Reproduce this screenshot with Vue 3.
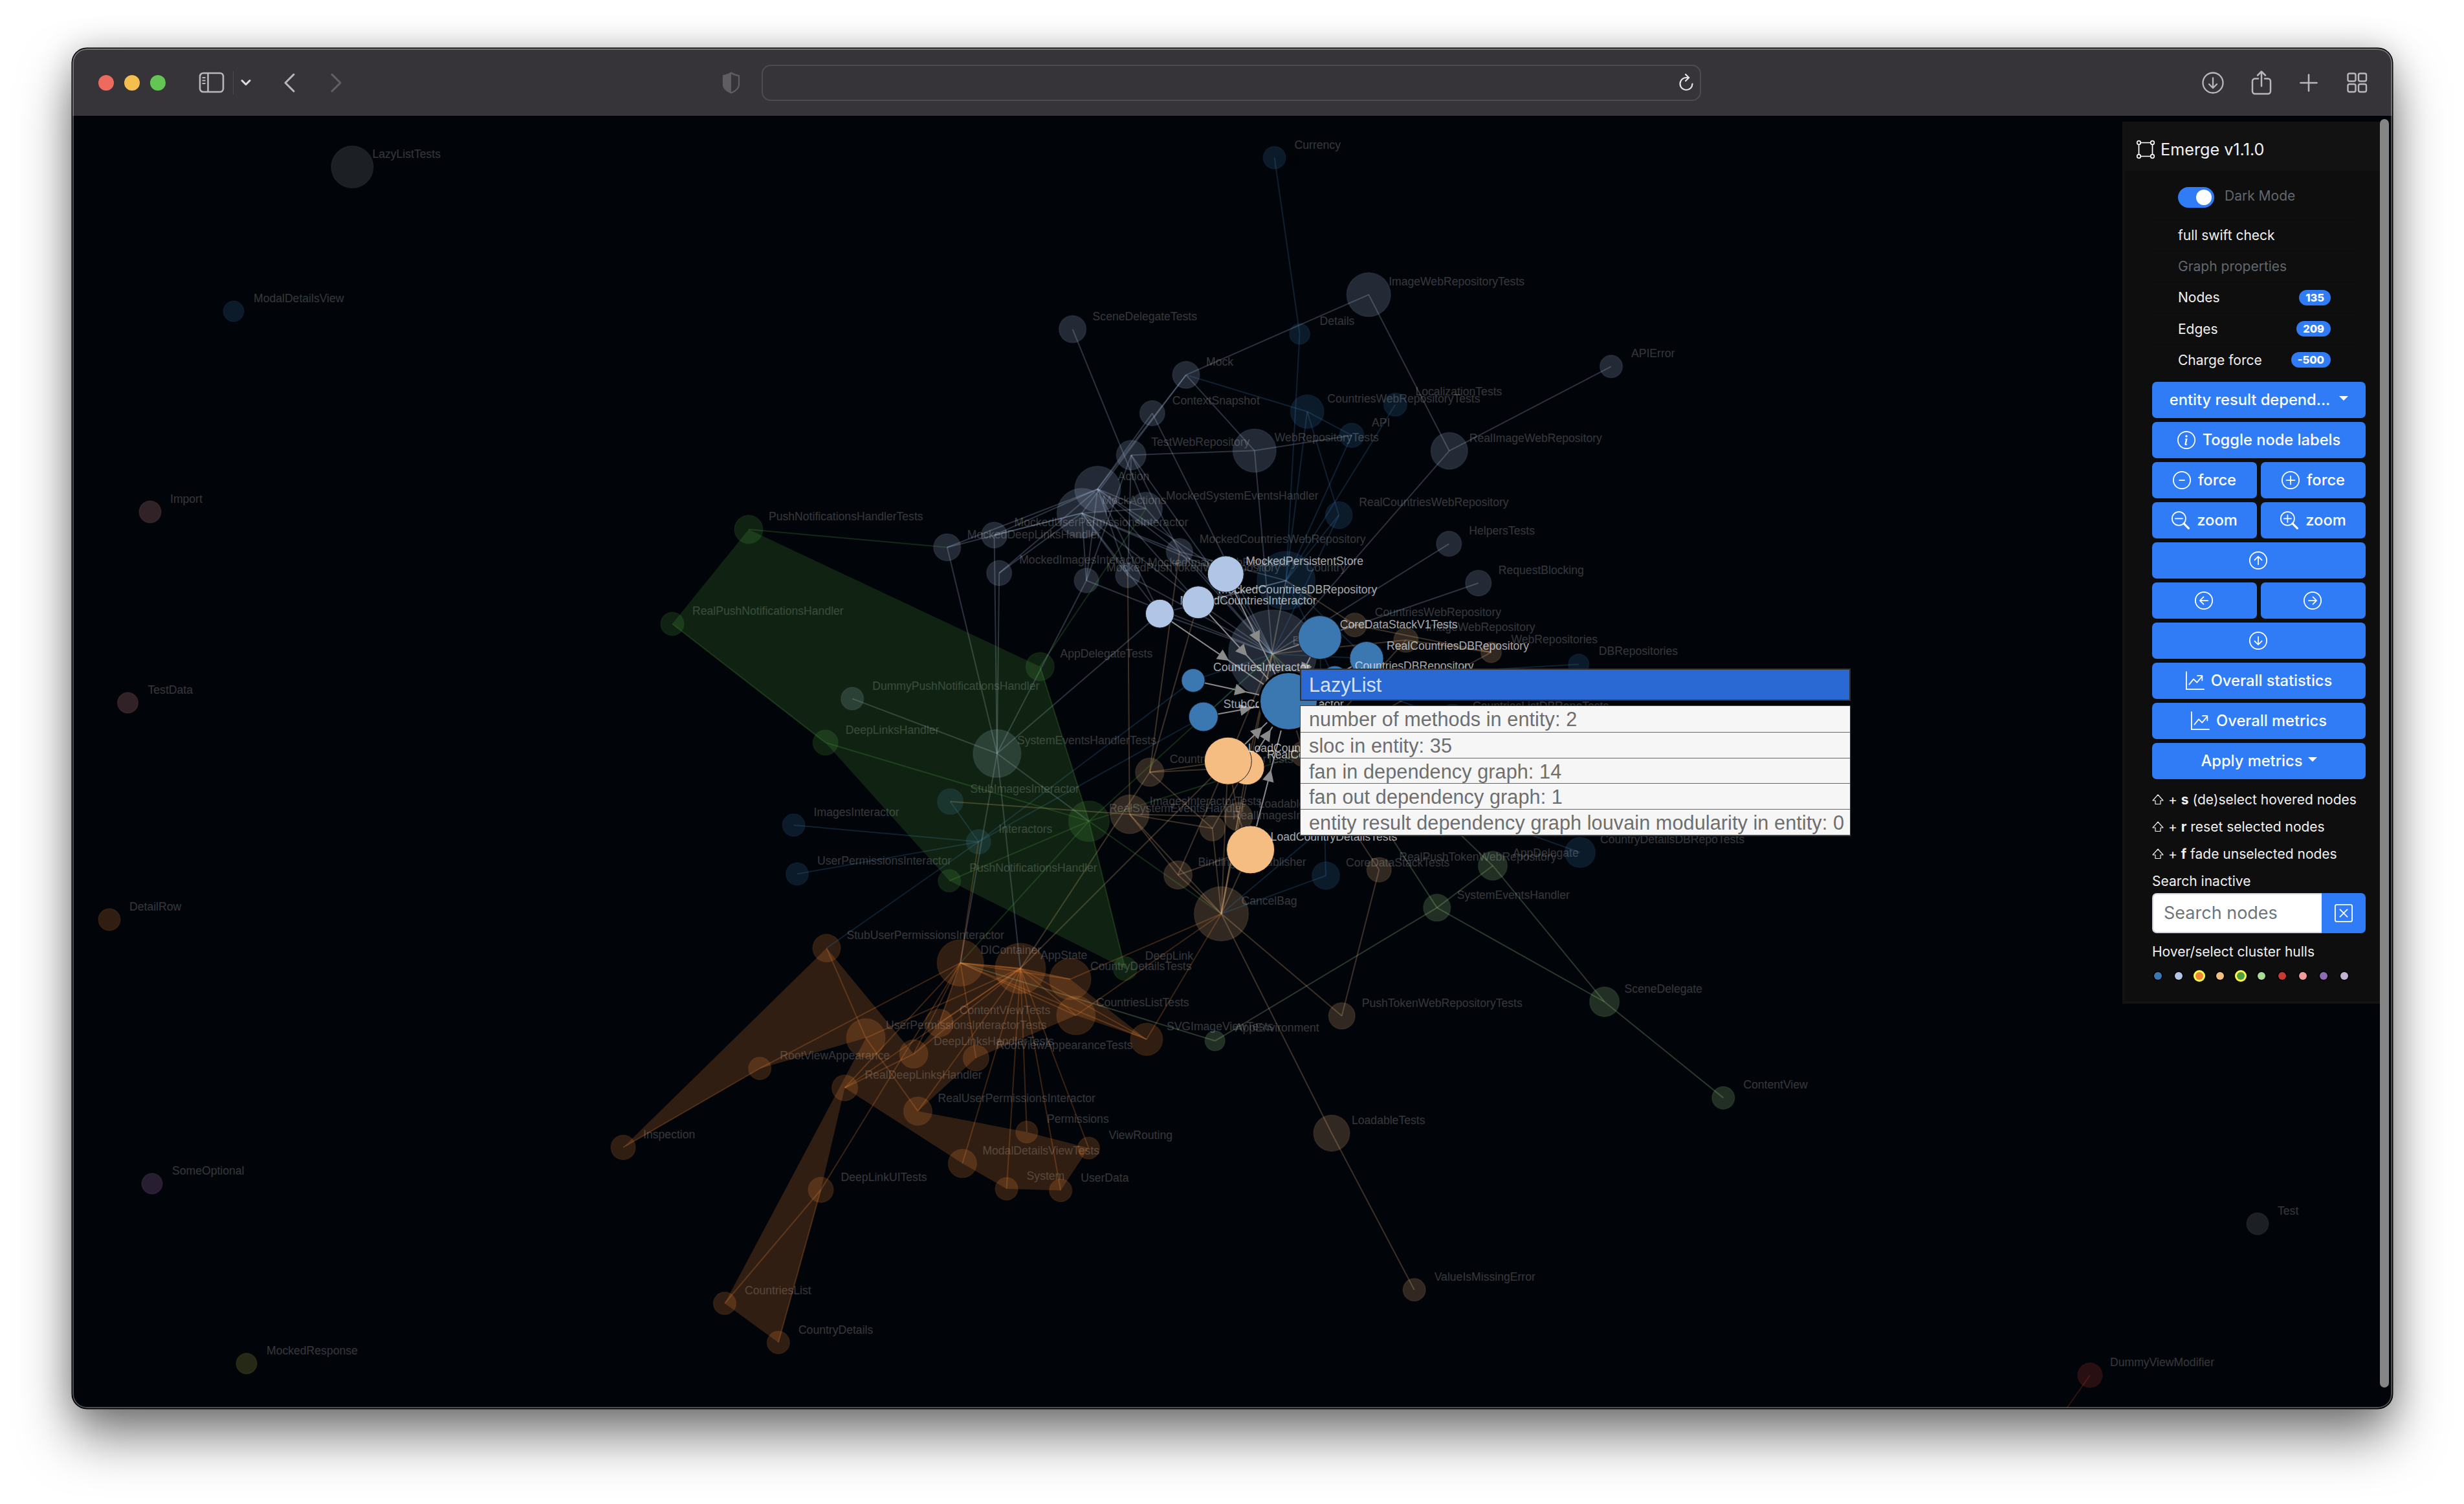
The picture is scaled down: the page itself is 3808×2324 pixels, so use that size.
<script setup>
const palette = {
  B: '#3b78b1', L: '#b1c5e6', O: '#ef8636', T: '#f5bd82', G: '#519e3e', g: '#a8dd93',
  R: '#c63a33', P: '#f19d99', V: '#c58ad0', Y: '#bcbd45', X: '#8a8a8a'
}

// name, x, y, radius, cluster colour
const faded = [
  ['LazyListTests', 544.4, 258, 32.5, 'X'], ['ModalDetailsView', 361, 481, 16, 'B'], ['Import', 232, 791, 17, 'P'],
  ['TestData', 197.5, 1086, 16, 'P'], ['DetailRow', 169, 1421, 17, 'O'], ['SomeOptional', 235, 1829, 16, 'V'],
  ['MockedResponse', 381, 2107, 16, 'Y'], ['Test', 3489, 1891, 17, 'X'], ['DummyViewModifier', 3230, 2125, 19, 'R'],
  ['Currency', 1969.6, 243.7, 17.5, 'B'], ['Details', 2008.6, 516, 16, 'B'], ['ImageWebRepositoryTests', 2115.2, 455.3, 34, 'L'],
  ['APIError', 2490, 566.3, 17.5, 'L'], ['LocalizationTests', 2156.4, 625.3, 18, 'B'],
  ['CountriesWebRepositoryTests', 2020.2, 636, 26, 'B'], ['API', 2089, 672.7, 19, 'B'],
  ['WebRepositoryTests', 1938.8, 696.3, 33.5, 'L'], ['RealImageWebRepository', 2239.8, 696.7, 28.5, 'L'],
  ['RealCountriesWebRepository', 2069.2, 796, 21, 'B'], ['HelpersTests', 2239.3, 840.3, 19.5, 'L'],
  ['RequestBlocking', 2284.8, 901, 20, 'L'], ['SceneDelegateTests', 1657.6, 508.6, 21, 'L'], ['Mock', 1833, 579.3, 21, 'L'],
  ['ContextSnapshot', 1780.8, 638.6, 19.5, 'L'], ['TestWebRepository', 1748.2, 703.2, 23, 'L'], ['Action', 1696.4, 755.7, 35.5, 'L'],
  ['MockActions', 1671.9, 792.9, 38.5, 'L'], ['MockedSystemEventsHandler', 1771, 786, 25.5, 'L'],
  ['MockedUserPermissionsInteractor', 1536.6, 826.8, 20, 'L'], ['MockedDeepLinksHandler', 1463.8, 845.7, 21, 'L'],
  ['MockedImagesInteractor', 1544.2, 885.4, 19.5, 'L'], ['MockedImageWebRepository', 1742.9, 889.3, 19, 'L'],
  ['MockedPushTokenWebRepository', 1679, 897, 19, 'L'], ['MockedCountriesWebRepository', 1822.8, 852.5, 20.5, 'L'],
  ['Country', 1987.5, 897.1, 45, 'B'], ['Error', 1966.5, 1010.4, 68, 'L'], ['CountriesWebRepository', 2093.8, 965.7, 18.5, 'T'],
  ['ImageWebRepository', 2172.8, 989, 19, 'T'], ['WebRepositories', 2304.5, 1008, 16, 'T'], ['DBRepositories', 2439.8, 1026.4, 16, 'B'],
  ['CountriesInteractorTests', 1776.8, 1193.2, 22, 'T'], ['RealSystemEventsHandler', 1682.9, 1268.9, 31.5, 'G'],
  ['ImagesInteractorTests', 1745.8, 1258.2, 30, 'T'], ['RealImagesInteractor', 1873.7, 1280, 19.5, 'T'],
  ['Loadable', 1913.8, 1262, 22, 'T'], ['BindingWithPublisher', 1820.5, 1352, 22, 'T'], ['CancelBag', 1887.5, 1412, 42, 'T'],
  ['CoreDataStackTests', 2049, 1353, 21.5, 'B'], ['RealPushTokenWebRepository', 2131.3, 1344, 19, 'T'],
  ['AppDelegate', 2307, 1337.7, 22.5, 'g'], ['CountryDetailsDBRepoTests', 2442, 1317.3, 23.5, 'B'],
  ['CountriesListDBRepoTests', 2245, 1111, 23, 'B'], ['SystemEventsHandler', 2220.8, 1402.6, 21, 'g'],
  ['SceneDelegate', 2479.6, 1548, 23, 'g'], ['ContentView', 2663.3, 1696.4, 17.5, 'g'], ['ValueIsMissingError', 2185.7, 1993, 17.5, 'T'],
  ['LoadableTests', 2058, 1751, 28, 'T'], ['PushTokenWebRepositoryTests', 2073.7, 1569.7, 20.5, 'T'],
  ['AppEnvironment', 1877.7, 1608.3, 15.5, 'g'], ['SVGImageViewTests', 1771.9, 1606, 25, 'O'],
  ['CountriesListTests', 1662.9, 1569, 30, 'O'], ['CountryDetailsTests', 1654, 1513, 32, 'O'], ['DeepLink', 1738.8, 1496.7, 18.5, 'G'],
  ['AppState', 1577, 1496.4, 39, 'O'], ['DIContainer', 1484.2, 1487.9, 36, 'O'], ['StubUserPermissionsInteractor', 1277.5, 1465, 21.5, 'O'],
  ['PushNotificationsHandler', 1467.2, 1361, 17.5, 'G'], ['UserPermissionsInteractor', 1232, 1350.4, 17.5, 'B'],
  ['ImagesInteractor', 1226.6, 1275, 17.5, 'B'], ['Interactors', 1512.3, 1300.7, 19, 'B'], ['StubImagesInteractor', 1468.6, 1238.6, 20, 'B'],
  ['SystemEventsHandlerTests', 1540.9, 1164.3, 37, 'L'], ['DeepLinksHandler', 1275.7, 1147.5, 19.5, 'G'],
  ['DummyPushNotificationsHandler', 1317.2, 1079.6, 17.5, 'L'], ['AppDelegateTests', 1607.4, 1030, 22, 'G'],
  ['RealPushNotificationsHandler', 1039, 964, 18, 'G'], ['PushNotificationsHandlerTests', 1157, 818, 22, 'G'],
  ['UserPermissionsInteractorTests', 1338.1, 1603.9, 30, 'O'], ['ContentViewTests', 1451.7, 1580.7, 21.5, 'O'],
  ['DeepLinksHandlerTests', 1412.1, 1628.6, 22, 'O'], ['RootViewAppearanceTests', 1508.4, 1635, 20, 'O'],
  ['RootViewAppearance', 1174.2, 1651, 17.5, 'O'], ['RealDeepLinksHandler', 1305.6, 1681, 20, 'O'],
  ['RealUserPermissionsInteractor', 1418.5, 1716.9, 22, 'O'], ['Permissions', 1586.9, 1749.3, 17, 'O'], ['ViewRouting', 1682.5, 1774, 17, 'O'],
  ['ModalDetailsViewTests', 1487.4, 1797.8, 22, 'O'], ['System', 1555.6, 1837, 17.5, 'O'], ['UserData', 1639.2, 1839.5, 17.5, 'O'],
  ['DeepLinkUITests', 1268.6, 1838.5, 19.5, 'O'], ['Inspection', 963.1, 1773, 19, 'O'], ['CountriesList', 1120, 2014, 17.5, 'O'],
  ['CountryDetails', 1202.9, 2074.5, 17.5, 'O'], ['Store', 2015, 1165, 20, 'T']
]

const active = [
  ['RealCountriesInteractor', 1927, 1185.7, 27, 'T'], ['LoadCountriesTests', 1897.8, 1175.7, 36.5, 'T'],
  ['LoadCountryDetailsTests', 1932.6, 1312.9, 37, 'T'], ['MockedCountriesInteractor', 1792.4, 948.2, 22, 'L'],
  ['MockedCountriesDBRepository', 1851.8, 930.7, 25, 'L'], ['MockedPersistentStore', 1894.2, 887.1, 28, 'L'],
  ['CoreDataStackV1Tests', 2039.7, 985, 33.5, 'B'], ['RealCountriesDBRepository', 2112, 1017.5, 26, 'B'],
  ['CountriesDBRepository', 2062.8, 1049, 20, 'B'], ['CountriesInteractor', 1844, 1051.4, 18, 'B'],
  ['StubCountriesInteractor', 1859.8, 1107.5, 22.5, 'B']
]
const focus = { x: 1991.5, y: 1083.6, r: 45 }

const at = Object.fromEntries([...faded, ...active].map((n) => [n[0], n]))

const adjacency = {
  L: {
    SceneDelegateTests: 'MockedSystemEventsHandler',
    ImageWebRepositoryTests: 'Mock RealImageWebRepository',
    RealImageWebRepository: 'Error APIError',
    Mock: 'Action MockActions WebRepositoryTests',
    ContextSnapshot: 'Action Error',
    TestWebRepository: 'WebRepositoryTests MockedPushTokenWebRepository MockedImageWebRepository MockedCountriesWebRepository Error',
    WebRepositoryTests: 'API Error',
    Action: 'MockedUserPermissionsInteractor MockedDeepLinksHandler MockedImagesInteractor MockedPushTokenWebRepository MockedImageWebRepository MockedCountriesWebRepository MockedSystemEventsHandler MockedPersistentStore MockedCountriesInteractor MockedCountriesDBRepository',
    MockActions: 'MockedUserPermissionsInteractor MockedDeepLinksHandler MockedImagesInteractor MockedPushTokenWebRepository MockedImageWebRepository MockedCountriesWebRepository MockedSystemEventsHandler MockedPersistentStore MockedCountriesInteractor MockedCountriesDBRepository',
    SystemEventsHandlerTests: 'MockedDeepLinksHandler MockedUserPermissionsInteractor MockedImagesInteractor MockedPushTokenWebRepository MockedCountriesInteractor DummyPushNotificationsHandler RealSystemEventsHandler DIContainer AppState',
    Error: 'MockedPushTokenWebRepository MockedImageWebRepository MockedCountriesWebRepository MockedSystemEventsHandler HelpersTests RequestBlocking CoreDataStackV1Tests MockedPersistentStore MockedCountriesDBRepository MockedCountriesInteractor',
    Country: 'MockedCountriesWebRepository MockedCountriesDBRepository MockedCountriesInteractor'
  },
  B: {
    Currency: 'Details',
    Mock: 'CountriesWebRepositoryTests',
    Country: 'Details CountriesWebRepositoryTests API LocalizationTests RealCountriesWebRepository Error RealCountriesDBRepository CountriesDBRepository',
    CountriesWebRepositoryTests: 'API RealCountriesWebRepository',
    Error: 'RealCountriesWebRepository RealCountriesDBRepository CountriesInteractor StubCountriesInteractor',
    Interactors: 'ImagesInteractor UserPermissionsInteractor StubImagesInteractor StubUserPermissionsInteractor CountriesInteractor StubCountriesInteractor',
    DBRepositories: 'CountriesDBRepository',
    CancelBag: 'CoreDataStackTests CountriesListDBRepoTests',
    CoreDataStackTests: 'CoreDataStackV1Tests',
    CountryDetailsDBRepoTests: 'Store',
    CountriesListDBRepoTests: 'CountriesDBRepository'
  },
  O: {
    DIContainer: 'AppState ContentViewTests DeepLinksHandlerTests RootViewAppearanceTests RealDeepLinksHandler RootViewAppearance DeepLinkUITests CountriesListTests CountryDetailsTests Interactors SVGImageViewTests',
    AppState: 'ContentViewTests DeepLinksHandlerTests UserPermissionsInteractorTests RealUserPermissionsInteractor Permissions ViewRouting ModalDetailsViewTests System UserData RealDeepLinksHandler CountryDetailsTests CountriesListTests SVGImageViewTests DIContainer',
    RealDeepLinksHandler: 'DeepLinksHandlerTests',
    RootViewAppearance: 'Inspection',
    UserPermissionsInteractorTests: 'StubUserPermissionsInteractor RealUserPermissionsInteractor',
    DeepLinkUITests: 'CountriesList CountryDetails',
    CancelBag: 'CountryDetailsTests CountriesListTests SVGImageViewTests'
  },
  T: {
    CountriesInteractorTests: 'MockedCountriesWebRepository MockedCountriesDBRepository LoadCountriesTests RealCountriesInteractor AppState RealImagesInteractor',
    ImagesInteractorTests: 'MockedImageWebRepository StubImagesInteractor Loadable RealImagesInteractor BindingWithPublisher CancelBag',
    CancelBag: 'Loadable RealImagesInteractor LoadCountriesTests RealCountriesInteractor LoadCountryDetailsTests Country PushTokenWebRepositoryTests LoadableTests BindingWithPublisher',
    LoadableTests: 'ValueIsMissingError',
    BindingWithPublisher: 'LoadCountryDetailsTests LoadCountriesTests',
    PushTokenWebRepositoryTests: 'RealPushTokenWebRepository',
    Store: 'RealPushTokenWebRepository WebRepositories ImageWebRepository Error',
    Country: 'CountriesWebRepository',
    WebRepositories: 'CountriesWebRepository ImageWebRepository',
    Error: 'CountriesWebRepository ImageWebRepository LoadCountriesTests RealCountriesInteractor',
    LoadCountriesTests: 'AppState Loadable',
    Loadable: 'LoadCountryDetailsTests',
    RealImagesInteractor: 'RealCountriesInteractor'
  },
  G: {
    PushNotificationsHandlerTests: 'MockedDeepLinksHandler',
    RealPushNotificationsHandler: 'DeepLinksHandler',
    RealSystemEventsHandler: 'DeepLinksHandler PushNotificationsHandler DIContainer AppDelegateTests DeepLink CancelBag Error Store',
    AppDelegateTests: 'MockedSystemEventsHandler'
  },
  g: {
    SystemEventsHandler: 'AppDelegate SceneDelegate AppEnvironment Error',
    AppDelegate: 'SceneDelegate Error',
    SceneDelegate: 'ContentView',
    AppEnvironment: 'DIContainer'
  }
}

const edges = Object.entries(adjacency).flatMap(([c, from]) =>
  Object.entries(from).flatMap(([a, list]) =>
    list.split(' ').map((b) => ({ x1: at[a][1], y1: at[a][2], x2: at[b][1], y2: at[b][2], c: palette[c] }))
  )
)

const arrows = active.map(([, x, y]) => ({
  x, y,
  mid: `translate(${(x + focus.x) / 2} ${(y + focus.y) / 2}) rotate(${(Math.atan2(focus.y - y, focus.x - x) * 180) / Math.PI})`
}))

const hull = (names) => names.split(' ').map((n) => `${at[n][1]},${at[n][2]}`).join(' ')
const orangeHull = hull('StubUserPermissionsInteractor Inspection RootViewAppearance UserPermissionsInteractorTests CountriesList CountryDetails DeepLinkUITests RealDeepLinksHandler ModalDetailsViewTests System UserData ViewRouting Permissions RealUserPermissionsInteractor RootViewAppearanceTests CountriesListTests SVGImageViewTests CountryDetailsTests AppState DIContainer ContentViewTests DeepLinksHandlerTests')
const greenHull = hull('PushNotificationsHandlerTests RealPushNotificationsHandler DeepLinksHandler PushNotificationsHandler DeepLink RealSystemEventsHandler AppDelegateTests')

const labelled = faded.filter((n) => n[0] !== 'Store')

const facts = [
  'number of methods in entity: 2', 'sloc in entity: 35', 'fan in dependency graph: 14',
  'fan out dependency graph: 1', 'entity result dependency graph louvain modularity in entity: 0'
]
const stats = [['Nodes', '135'], ['Edges', '209'], ['Charge force', '-500']]
const hints = [['s', '(de)select hovered nodes'], ['r', 'reset selected nodes'], ['f', 'fade unselected nodes']]
const clusters = [
  ['#3b78b1'], ['#b1c5e6'], ['#ef8636', true], ['#f5bd82'], ['#519e3e', true],
  ['#a8dd93'], ['#c63a33'], ['#f19d99'], ['#8e6ab8'], ['#c2b2d3']
]
</script>

<template>
  <div class="desktop">
    <div class="window">
      <header class="toolbar">
        <div class="lights"><i class="red"></i><i class="amber"></i><i class="green"></i></div>
        <svg class="sidebar-icon" width="40" height="34" viewBox="0 0 40 34" fill="none" stroke="#b9b7ba" stroke-width="2.6">
          <rect x="2" y="2" width="36" height="29" rx="5" /><path d="M14.500 2v29" /><path d="M5.500 9h5M5.500 13.500h5M5.500 18h5" stroke-width="2" />
        </svg>
        <span class="rule"></span>
        <svg class="chev" width="16" height="12" viewBox="0 0 16 12" fill="none" stroke="#dedcdf" stroke-width="3" stroke-linecap="round" stroke-linejoin="round"><path d="M2 2.500l6 6 6-6" /></svg>
        <svg class="back" width="20" height="32" viewBox="0 0 20 32" fill="none" stroke="#b9b7ba" stroke-width="3" stroke-linecap="round" stroke-linejoin="round"><path d="M16 3L3 16l13 13" /></svg>
        <svg class="fwd" width="20" height="32" viewBox="0 0 20 32" fill="none" stroke="#626065" stroke-width="3" stroke-linecap="round" stroke-linejoin="round"><path d="M4 3l13 13L4 29" /></svg>
        <svg class="shield" width="28" height="34" viewBox="0 0 28 34">
          <path d="M14 1.500C10 4.500 6 5.500 2 6v14c0 6 6 10 12 12.500C20 30 26 26 26 20V6c-4-.5-8-1.500-12-4.500z" fill="none" stroke="#5f5d62" stroke-width="2.200" />
          <path d="M14 1.500C10 4.500 6 5.500 2 6v14c0 6 6 10 12 12.500z" fill="#5f5d62" />
        </svg>
        <div class="address">
          <svg width="24" height="30" viewBox="0 0 24 30" fill="none" stroke="#e6e4e7" stroke-width="2.200" stroke-linecap="round" stroke-linejoin="round">
            <path d="M21.500 16.500a9.500 9.500 0 1 1-9.500-9.500h3" /><path d="M11 2l5.200 5-5.200 5" />
          </svg>
        </div>
        <div class="actions">
          <svg width="36" height="36" viewBox="0 0 36 36" fill="none" stroke="#b9b7ba" stroke-width="2.300" stroke-linecap="round" stroke-linejoin="round"><circle cx="18" cy="18" r="15.500" /><path d="M18 10.500v15M12 20l6 6 6-6" /></svg>
          <svg width="32" height="40" viewBox="0 0 32 40" fill="none" stroke="#b9b7ba" stroke-width="2.500" stroke-linecap="round" stroke-linejoin="round"><path d="M11 13.500H6a4 4 0 0 0-4 4V33a4 4 0 0 0 4 4h20a4 4 0 0 0 4-4V17.500a4 4 0 0 0-4-4h-5M16 25V3M10 8.500l6-6 6 6" /></svg>
          <svg width="28" height="28" viewBox="0 0 28 28" stroke="#b9b7ba" stroke-width="2.600" stroke-linecap="round"><path d="M14 1.500v25M1.500 14h25" /></svg>
          <svg width="32" height="32" viewBox="0 0 32 32" fill="none" stroke="#b9b7ba" stroke-width="2.400"><rect x="1.500" y="1.500" width="12" height="12" rx="2.500" /><rect x="18" y="1.500" width="12" height="12" rx="2.500" /><rect x="1.500" y="18" width="12" height="12" rx="2.500" /><rect x="18" y="18" width="12" height="12" rx="2.500" /></svg>
        </div>
      </header>

      <main class="page">
        <svg class="graph" width="3585" height="1995" viewBox="112 180 3585 1995">
          <g class="faded">
            <circle v-for="n in faded" :key="n[0]" :cx="n[1]" :cy="n[2]" :r="n[3]" :fill="palette[n[4]]" :stroke="palette[n[4]]" />
          </g>
          <g class="edges">
            <line v-for="(e, i) in edges" :key="i" :x1="e.x1" :y1="e.y1" :x2="e.x2" :y2="e.y2" :stroke="e.c" />
            <line x1="3230" y1="2125" x2="3194" y2="2176" stroke="#c63a33" />
          </g>
          <g class="labels">
            <text v-for="n in labelled" :key="n[0]" :x="n[1] + 31" :y="n[2] - 14">{{ n[0] }}</text>
          </g>
          <g class="lit-edges">
            <template v-for="(a, i) in arrows" :key="i">
              <line :x1="a.x" :y1="a.y" :x2="focus.x" :y2="focus.y" />
              <path d="M9 0L-9 9V-9Z" :transform="a.mid" />
            </template>
          </g>
          <g class="active labels lit">
            <template v-for="n in active" :key="n[0]">
              <circle :cx="n[1]" :cy="n[2]" :r="n[3]" :fill="palette[n[4]]" />
              <text :x="n[1] + 31" :y="n[2] - 14">{{ n[0] }}</text>
            </template>
            <circle class="focus" :cx="focus.x" :cy="focus.y" :r="focus.r" :fill="palette.B" />
          </g>
          <polygon :points="greenHull" fill="#519e3e" opacity=".2" />
          <polygon :points="orangeHull" fill="#ef8636" opacity=".2" />
        </svg>

        <div class="tooltip">
          <div class="tip-title">LazyList</div>
          <div class="tip-body">
            <div v-for="f in facts" :key="f" class="tip-row">{{ f }}</div>
          </div>
        </div>

        <aside class="panel">
          <div class="brand">
            <svg width="30" height="30" viewBox="0 0 30 30" fill="none" stroke="#fff" stroke-width="1.700">
              <circle cx="4.500" cy="4.500" r="2.800" /><circle cx="25.500" cy="4.500" r="2.800" /><circle cx="4.500" cy="25.500" r="2.800" /><circle cx="25.500" cy="25.500" r="2.800" />
              <path d="M7.300 4.500h15.400M7.300 25.500h15.400M4.500 7.300v15.400M25.500 7.300v15.400" />
            </svg>
            <span>Emerge v1.1.0</span>
          </div>
          <div class="props">
            <div class="prop mode"><span class="switch"><i></i></span><span class="muted">Dark Mode</span></div>
            <div class="prop">full swift check</div>
            <div class="prop muted">Graph properties</div>
            <div v-for="s in stats" :key="s[0]" class="prop">{{ s[0] }}<b>{{ s[1] }}</b></div>
          </div>
          <div class="buttons">
            <button class="select"><span>entity result depend...</span><i class="caret"></i></button>
            <button>
              <svg viewBox="0 0 16 16"><circle cx="8" cy="8" r="7.500" /><path class="solid" d="M8.930 6.588l-2.290.287-.082.380.450.083c.294.070.352.176.288.469l-.738 3.468c-.194.897.105 1.319.808 1.319.545 0 1.178-.252 1.465-.598l.088-.416c-.200.176-.492.246-.686.246-.275 0-.375-.193-.304-.533L8.930 6.588zM9 4.500a1 1 0 1 1-2 0 1 1 0 0 1 2 0z" /></svg>
              Toggle node labels
            </button>
            <div class="pair">
              <button><svg viewBox="0 0 16 16"><circle cx="8" cy="8" r="7.500" /><path d="M5.700 8h4.600" /></svg>force</button>
              <button><svg viewBox="0 0 16 16"><circle cx="8" cy="8" r="7.500" /><path d="M4.300 8h7.400M8 4.300v7.400" /></svg>force</button>
            </div>
            <div class="pair">
              <button><svg viewBox="0 0 16 16"><circle cx="6.500" cy="6.500" r="6" /><path d="M3.300 6.500h6.400" /><path class="handle" d="M10.800 10.800l4.300 4.300" /></svg>zoom</button>
              <button><svg viewBox="0 0 16 16"><circle cx="6.500" cy="6.500" r="6" /><path d="M3.300 6.500h6.400M6.500 3.300v6.400" /><path class="handle" d="M10.800 10.800l4.300 4.300" /></svg>zoom</button>
            </div>
            <button><svg class="lone" viewBox="0 0 16 16"><circle cx="8" cy="8" r="7.500" /><path d="M8 11.500V4.700M4.800 7.700L8 4.500l3.200 3.200" /></svg></button>
            <div class="pair">
              <button><svg class="lone" viewBox="0 0 16 16"><circle cx="8" cy="8" r="7.500" /><path d="M11.500 8H4.700M7.700 4.800L4.500 8l3.200 3.200" /></svg></button>
              <button><svg class="lone" viewBox="0 0 16 16"><circle cx="8" cy="8" r="7.500" /><path d="M4.500 8h6.800M8.300 4.800L11.500 8l-3.200 3.200" /></svg></button>
            </div>
            <button><svg class="lone" viewBox="0 0 16 16"><circle cx="8" cy="8" r="7.500" /><path d="M8 4.500v6.800M4.800 8.300L8 11.500l3.200-3.200" /></svg></button>
            <button><svg viewBox="0 0 16 16"><path d="M.5 0v15.500H16M3 11.200L6.900 6.500l3 3L14.400 4M10.300 3.500h4.200v4.200" /></svg>Overall statistics</button>
            <button><svg viewBox="0 0 16 16"><path d="M.5 0v15.500H16M3 11.200L6.900 6.500l3 3L14.400 4M10.300 3.500h4.200v4.200" /></svg>Overall metrics</button>
            <button class="apply">Apply metrics<i class="caret"></i></button>
          </div>
          <div class="hints">
            <p v-for="h in hints" :key="h[0]">
              <svg width="18" height="17" viewBox="0 0 18 17" fill="none" stroke="#eee" stroke-width="1.200" stroke-linejoin="round"><path d="M9 1L1 10h4v5.500h8V10h4z" /></svg>
              <span>+ <b>{{ h[0] }}</b> {{ h[1] }}</span>
            </p>
            <p>Search inactive</p>
          </div>
          <div class="search">
            <span class="field">Search nodes</span>
            <span class="clear"><svg width="28" height="28" viewBox="0 0 16 16" fill="none" stroke="#fff" stroke-width="1"><rect x=".5" y=".5" width="15" height="15" rx="1.500" /><path d="M4.800 4.800l6.400 6.400M11.200 4.800l-6.400 6.400" stroke-linecap="round" /></svg></span>
          </div>
          <p class="hulls">Hover/select cluster hulls</p>
          <div class="dots">
            <span v-for="c in clusters" :key="c[0]" :class="{ on: c[1] }"><i :style="{ background: c[0] }"></i></span>
          </div>
        </aside>
        <span class="scrollbar"></span>
      </main>
    </div>
  </div>
</template>

<style>
html, body { margin: 0; background: #fff; }
</style>

<style scoped>
.desktop { width: 3808px; height: 2324px; box-sizing: border-box; padding: 75px 111px 148px 112px; background: #fff; overflow: hidden; font-family: Inter, "Liberation Sans", sans-serif; }
.window { position: relative; width: 3585px; height: 2101px; border-radius: 22px; overflow: hidden; background: #010409; box-shadow: 0 0 0 1.500px #000, 0 44px 80px rgba(0,0,0,.5), 0 0 50px rgba(0,0,0,.22); }
.window::after { content: ""; position: absolute; inset: 0; border-radius: 22px; box-shadow: inset 0 0 0 2px rgba(255,255,255,.3); pointer-events: none; }
.toolbar { display: flex; align-items: center; height: 105px; box-sizing: border-box; padding: 1px 38px 0 40px; background: #373439; border-bottom: 1px solid #000; }
.lights { display: flex; gap: 16px; }
.lights i { width: 24px; height: 24px; border-radius: 50%; }
.red { background: #ed6a5e; } .amber { background: #f5bf4f; } .green { background: #62c554; }
.sidebar-icon { margin-left: 51px; }
.rule { width: 1px; height: 36px; margin-left: 13px; background: #4c494e; }
.chev { margin-left: 11px; }
.back { margin-left: 50px; }
.fwd { margin-left: 51px; }
.shield { margin-left: 587px; }
.address { width: 1452px; height: 56px; box-sizing: border-box; margin-left: 33px; padding-right: 9px; border: 2px solid #4e4b50; border-radius: 14px; display: flex; align-items: center; justify-content: flex-end; }
.actions { display: flex; align-items: center; margin-left: auto; }
.actions svg + svg { margin-left: 41px; }
.actions svg:nth-child(3) { margin-left: 43px; }
.actions svg:nth-child(4) { margin-left: 45px; }

.page { position: relative; height: 1996px; background: #010409; }
.graph { display: block; }
.faded circle { fill-opacity: .2; stroke-opacity: .08; stroke-width: 2; }
.edges line { stroke-width: 2; opacity: .24; }
.labels text { font: 17.600px "Liberation Sans", Arial, sans-serif; fill: #fff; opacity: .2; }
.lit text { opacity: .64; }
.lit-edges { stroke: #999; fill: #8a8a8a; }
.lit-edges line { stroke-width: 2; opacity: .9; }
.lit-edges path { stroke: none; }
.active circle { stroke: #1b2028; stroke-width: 1; }
.active .focus { stroke: #000; stroke-width: 3; }

.tooltip { position: absolute; left: 1897px; top: 853px; width: 851px; font: 30.600px "Liberation Sans", Arial, sans-serif; }
.tip-title { height: 50px; box-sizing: border-box; padding-left: 12px; border: 2px solid #333; background: #2a69d3; color: #d3e1f7; line-height: 46px; }
.tip-body { margin-top: 7px; border: 1px solid #444; border-bottom-width: 2px; }
.tip-row { height: 39.800px; box-sizing: border-box; padding-left: 13px; background: #f6f6f6; color: #6e6e6e; line-height: 41px; white-space: nowrap; letter-spacing: .09px; }
.tip-row + .tip-row { border-top: 1.500px solid #666; }

.panel { position: absolute; left: 3168px; top: 8px; width: 408px; height: 1363px; box-sizing: border-box; border: 4px solid #131313; background: #0e0e0e; color: #f1f1f1; font-size: 21px; }
.brand { display: flex; align-items: center; gap: 8px; height: 72px; box-sizing: border-box; padding: 6px 0 0 17px; background: #121212; font-size: 25.200px; }
.props { display: flex; flex-direction: column; margin: 2px 0 0 42px; width: 316px; }
.prop { display: flex; align-items: center; height: 48.200px; box-sizing: border-box; padding: 0 40px; border-top: 1px solid #0b0b0b; }
.prop.mode { height: 73px; padding-top: 5px; border: 0; gap: 16px; }
.mode .muted { margin-top: -5px; }
.muted { color: #62676d; }
.switch { width: 56px; height: 32px; border-radius: 16px; background: #2f7cf6; display: flex; align-items: center; justify-content: flex-end; }
.switch i { width: 24px; height: 24px; margin-right: 4px; border-radius: 50%; background: #fff; }
.prop b { margin-left: auto; height: 24px; padding: 0 10px; border-radius: 12px; background: #2f7cf6; color: #fff; font-size: 16.500px; font-weight: 800; line-height: 24px; }
.buttons { display: flex; flex-direction: column; gap: 6px; margin: 10px 0 0 42px; width: 330px; }
.pair { display: flex; gap: 6px; }
.pair button { flex: 1; }
button { display: flex; align-items: center; justify-content: center; height: 56px; padding: 0; border: 0; border-radius: 7px; background: #2f7cf6; color: #fff; font: 500 23.700px Inter, "Liberation Sans", sans-serif; }
button svg { width: 28px; height: 28px; margin-right: 11px; fill: none; stroke: #fff; stroke-width: 1; stroke-linecap: round; stroke-linejoin: round; overflow: visible; }
button svg.lone { margin: 0 2px 0 0; }
button .solid { fill: #fff; stroke: none; }
button .handle { stroke-width: 1.800; }
.caret { width: 0; height: 0; border: 7px solid transparent; border-top-color: #fff; border-bottom: 0; margin-left: 14px; }
.apply .caret { margin-left: 8px; margin-top: -4px; }
.select .caret { margin-top: -4px; }
.hints { margin: 11px 0 0 42px; }
.hints p { display: flex; align-items: center; gap: 7px; height: 42px; margin: 0; white-space: nowrap; }
.search { display: flex; width: 330px; height: 62px; margin: -3px 0 0 42px; }
.field { width: 262px; box-sizing: border-box; padding-left: 16px; border: 2px solid #ced4da; border-right: 0; border-radius: 7px 0 0 7px; background: #fff; color: #6c757d; font-size: 27px; line-height: 58px; }
.clear { width: 68px; border-radius: 0 7px 7px 0; background: #2f7cf6; display: flex; align-items: center; justify-content: center; }
.hulls { height: 30px; margin: 14px 0 0 42px; line-height: 30px; }
.dots { display: flex; margin: 13px 0 0 42px; gap: 14px; }
.dots span { width: 18px; height: 18px; border-radius: 50%; display: flex; align-items: center; justify-content: center; }
.dots i { width: 12px; height: 12px; border-radius: 50%; box-shadow: 0 0 0 1.500px #000; }
.dots .on { background: #fdf94e; }
.dots .on i { box-shadow: none; }
.scrollbar { position: absolute; left: 3566px; top: 4px; width: 14px; height: 1960px; border-radius: 7px; background: rgba(138,138,138,.96); }
</style>
